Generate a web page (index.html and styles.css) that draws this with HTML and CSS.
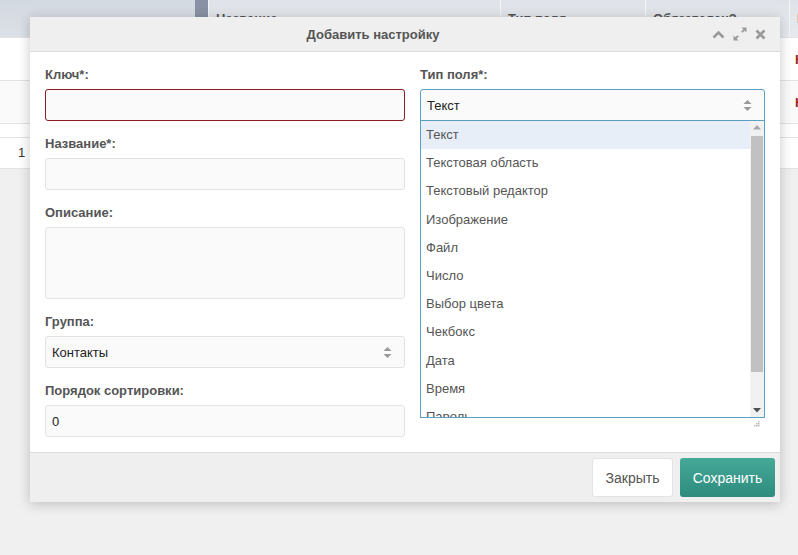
FILE: index.html
```html
<!DOCTYPE html>
<html lang="ru">
<head>
  <meta charset="UTF-8" />
  <meta name="viewport" content="width=device-width, initial-scale=1.0"/>
  <title>Настройки</title>
  <link rel="stylesheet" href="styles.css">
</head>
<body>
  <!-- background table -->
  <div class="table">
    <div class="t-head">
      <div class="th th-first"></div>
      <div class="th th-band"></div>
      <div class="th">Название</div>
      <div class="th">Тип поля</div>
      <div class="th">Обязателен?</div>
      <div class="th">Группа</div>
    </div>
    <div class="t-row">
      <div class="td"></div><div class="td"></div><div class="td"></div>
      <div class="td"></div><div class="td"></div><div class="td td-red">Нет</div>
    </div>
    <div class="t-row t-row-alt">
      <div class="td"></div><div class="td"></div><div class="td"></div>
      <div class="td"></div><div class="td"></div><div class="td td-red">Нет</div>
    </div>
    <div class="t-gap"></div>
    <div class="t-pager"><span class="page-num">1</span></div>
  </div>

  <div class="modal">
    <div class="modal-head">
      <div class="modal-title">Добавить настройку</div>
      <div class="modal-tools">
        <svg width="13" height="9" viewBox="0 0 13 9"><path d="M1.5 7.5 L6.5 2.5 L11.5 7.5" fill="none" stroke="#999" stroke-width="2.6"/></svg>
        <svg width="14" height="14" viewBox="0 0 14 14">
          <polygon points="8.5,0.5 13.5,0.5 13.5,5.5" fill="#999"/>
          <line x1="12" y1="2" x2="8.8" y2="5.2" stroke="#999" stroke-width="1.8"/>
          <polygon points="0.5,8.5 0.5,13.5 5.5,13.5" fill="#999"/>
          <line x1="2" y1="12" x2="5.2" y2="8.8" stroke="#999" stroke-width="1.8"/>
        </svg>
        <svg width="11" height="11" viewBox="0 0 11 11"><path d="M1.5 1.5 L9.5 9.5 M9.5 1.5 L1.5 9.5" fill="none" stroke="#999" stroke-width="2.6"/></svg>
      </div>
    </div>

    <div class="modal-body">
      <div class="col">
        <div class="field">
          <label class="label">Ключ*:</label>
          <input class="input input-error" type="text">
        </div>
        <div class="field">
          <label class="label">Название*:</label>
          <input class="input" type="text">
        </div>
        <div class="field">
          <label class="label">Описание:</label>
          <textarea class="input textarea"></textarea>
        </div>
        <div class="field">
          <label class="label">Группа:</label>
          <div class="input select">
            <span>Контакты</span>
            <svg class="arrows" width="9" height="13" viewBox="0 0 9 13"><polygon points="4.5,1 8.5,5 0.5,5" fill="#999"/><polygon points="0.5,8 8.5,8 4.5,12" fill="#999"/></svg>
          </div>
        </div>
        <div class="field">
          <label class="label">Порядок сортировки:</label>
          <input class="input" type="text" value="0">
        </div>
      </div>

      <div class="col">
        <div class="field">
          <label class="label">Тип поля*:</label>
          <div class="dropdown">
            <div class="input select select-open">
              <span>Текст</span>
              <svg class="arrows" width="9" height="13" viewBox="0 0 9 13"><polygon points="4.5,1 8.5,5 0.5,5" fill="#999"/><polygon points="0.5,8 8.5,8 4.5,12" fill="#999"/></svg>
            </div>
            <div class="options">
              <div class="options-list">
                <div class="option option-active">Текст</div>
                <div class="option">Текстовая область</div>
                <div class="option">Текстовый редактор</div>
                <div class="option">Изображение</div>
                <div class="option">Файл</div>
                <div class="option">Число</div>
                <div class="option">Выбор цвета</div>
                <div class="option">Чекбокс</div>
                <div class="option">Дата</div>
                <div class="option">Время</div>
                <div class="option">Пароль</div>
                <div class="option">Ссылка</div>
              </div>
              <div class="scrollbar">
                <svg class="sb-arrow" width="14" height="14" viewBox="0 0 14 14"><polygon points="7,4 11,8.5 3,8.5" fill="#a8a8a8"/></svg>
                <div class="sb-track"><div class="sb-thumb"></div></div>
                <svg class="sb-arrow" width="14" height="14" viewBox="0 0 14 14"><polygon points="3,5 11,5 7,9.5" fill="#505050"/></svg>
              </div>
            </div>
            <svg class="grip" width="6" height="6" viewBox="0 0 6 6"><rect x="4" y="0" width="1.5" height="1.5" fill="#bbb"/><rect x="2" y="2" width="1.5" height="1.5" fill="#bbb"/><rect x="4" y="2" width="1.5" height="1.5" fill="#bbb"/><rect x="0" y="4" width="1.5" height="1.5" fill="#bbb"/><rect x="2" y="4" width="1.5" height="1.5" fill="#bbb"/><rect x="4" y="4" width="1.5" height="1.5" fill="#bbb"/></svg>
          </div>
        </div>
      </div>
    </div>

    <div class="modal-foot">
      <button class="btn btn-close">Закрыть</button>
      <button class="btn btn-save">Сохранить</button>
    </div>
  </div>
</body>
</html>
```

FILE: styles.css
```css
body {
  margin: 0;
  background: #f0f0f0;
  font-family: 'Liberation Sans', Arial, sans-serif;
  font-size: 13px;
  color: #555;
  position: relative;
  height: 555px;
  overflow: hidden;
}

/* background table */
.table {
  background: #fff;
}

.t-head,
.t-row {
  display: grid;
  grid-template-columns: 195px 13px 292px 145px 144px 1fr;
}

.t-head {
  height: 37px;
  background: linear-gradient(#dfe3e9, #e7eaee);
}

.th {
  padding: 11px 0 0 7px;
  font-weight: bold;
  color: #555;
  border-left: 1px solid #f4f5f7;
  white-space: nowrap;
  overflow: hidden;
}

.th-first {
  background: linear-gradient(#d3d9e1, #dce0e7);
  border-left: none;
}

.th-band {
  background: #8892a4;
  border-left: none;
  padding: 0;
}

.t-row {
  height: 42px;
  border-top: 1px solid #e3e3e3;
}

.t-row-alt {
  background: #fafafa;
}

.td {
  padding: 14px 0 0 6px;
  white-space: nowrap;
  overflow: hidden;
}

.td-red {
  color: #9a1f1f;
  font-weight: bold;
}

.t-gap {
  height: 13px;
  border-top: 1px solid #e3e3e3;
}

.t-pager {
  height: 30px;
  border-top: 1px solid #e3e3e3;
  border-bottom: 1px solid #e3e3e3;
  padding-left: 18px;
  line-height: 30px;
  color: #333;
}

/* modal */
.modal {
  position: absolute;
  left: 30px;
  top: 17px;
  width: 750px;
  background: #fff;
  box-shadow: 0 2px 12px rgba(0, 0, 0, 0.22);
}

.modal-head {
  height: 34px;
  display: flex;
  align-items: center;
  background: #efefef;
  border-bottom: 1px solid #dcdcdc;
}

.modal-title {
  flex: 1;
  text-align: center;
  font-weight: bold;
  color: #555;
  padding-left: 4px;
}

.modal-tools {
  display: flex;
  align-items: center;
  gap: 8px;
  padding-right: 14px;
}

.modal-body {
  display: grid;
  grid-template-columns: 360px 345px;
  column-gap: 15px;
  padding: 14px 15px 15px;
}

.field {
  margin-bottom: 14px;
}

.field:last-child {
  margin-bottom: 0;
}

.label {
  display: block;
  font-weight: bold;
  line-height: 18px;
  margin-bottom: 5px;
  color: #555;
}

.input {
  display: block;
  width: 100%;
  height: 32px;
  box-sizing: border-box;
  margin: 0;
  padding: 0 6px;
  border: 1px solid #e2e2e2;
  border-radius: 3px;
  background: #fafafa;
  font-family: inherit;
  font-size: 13px;
  color: #222;
  outline: none;
}

.input-error {
  border-color: #8c1d22;
}

.textarea {
  height: 72px;
  resize: none;
}

.select {
  display: flex;
  align-items: center;
  justify-content: space-between;
  padding-right: 12px;
}

.dropdown {
  position: relative;
}

.select-open {
  border-color: #5b9fc3;
  border-radius: 3px 3px 0 0;
}

.options {
  position: absolute;
  left: 0;
  right: 0;
  top: 31px;
  height: 298px;
  box-sizing: border-box;
  border: 1px solid #5b9fc3;
  background: #fff;
  display: flex;
  overflow: hidden;
}

.options-list {
  flex: 1;
  overflow: hidden;
}

.option {
  height: 28.2px;
  line-height: 28px;
  padding-left: 5px;
  color: #555;
  white-space: nowrap;
}

.option-active {
  background: #e8eef7;
}

.scrollbar {
  width: 14px;
  background: #f1f1f1;
  display: flex;
  flex-direction: column;
}

.sb-arrow {
  display: block;
  flex: none;
}

.sb-track {
  flex: 1;
  padding: 1px 1px 25px;
}

.sb-thumb {
  height: 236px;
  background: #c1c1c1;
}

.grip {
  position: absolute;
  right: 5px;
  top: 332px;
}

.modal-foot {
  display: flex;
  justify-content: flex-end;
  gap: 7px;
  padding: 5px;
  background: #efefef;
  border-top: 1px solid #dcdcdc;
}

.btn {
  height: 39px;
  border-radius: 3px;
  font-family: inherit;
  font-size: 14px;
  cursor: pointer;
}

.btn-close {
  width: 81px;
  background: #fff;
  border: 1px solid #e3e3e3;
  color: #555;
}

.btn-save {
  width: 95px;
  border: none;
  color: #fff;
  background: linear-gradient(#45a998, #2e8b7e);
}
```
